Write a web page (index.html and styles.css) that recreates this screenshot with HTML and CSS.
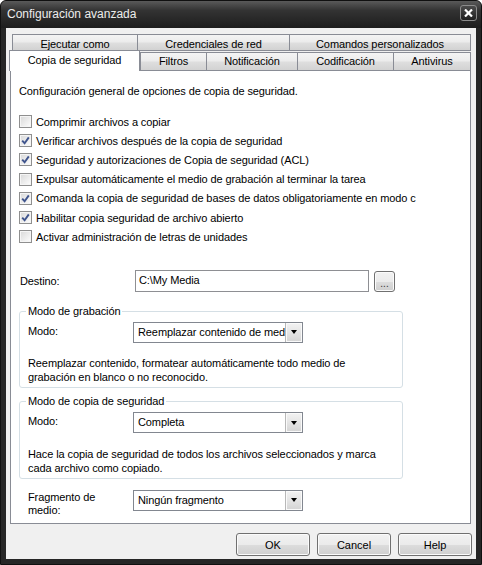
FILE: index.html
```html
<!DOCTYPE html>
<html lang="es">
<head>
  <meta charset="UTF-8">
  <title>Configuración avanzada</title>
  <link rel="stylesheet" href="styles.css">
</head>
<body>
  <div class="window">
    <div class="titlebar">
      <span class="title">Configuración avanzada</span>
      <button class="close" title="Cerrar">
        <svg width="9" height="8" viewBox="0 0 9 8"><path d="M1 0.5 L8 7.5 M8 0.5 L1 7.5" stroke="#fff" stroke-width="2.2" /></svg>
      </button>
    </div>

    <div class="client">
      <div class="tabs">
        <div class="tab-row back">
          <div class="tab t-ejecutar">Ejecutar como</div>
          <div class="tab t-credenciales">Credenciales de red</div>
          <div class="tab t-comandos">Comandos personalizados</div>
        </div>
        <div class="tab-row front">
          <div class="tab active t-copia">Copia de seguridad</div>
          <div class="tab t-filtros">Filtros</div>
          <div class="tab t-notificacion">Notificación</div>
          <div class="tab t-codificacion">Codificación</div>
          <div class="tab t-antivirus">Antivirus</div>
        </div>
      </div>

      <div class="panel">
        <p class="intro">Configuración general de opciones de copia de seguridad.</p>

        <ul class="checks">
          <li><span class="cb"></span>Comprimir archivos a copiar</li>
          <li><span class="cb"><svg width="9" height="9" viewBox="0 0 9 9"><path d="M1.2 4.6 L3.6 7.2 L7.8 1.4" /></svg></span>Verificar archivos después de la copia de seguridad</li>
          <li><span class="cb"><svg width="9" height="9" viewBox="0 0 9 9"><path d="M1.2 4.6 L3.6 7.2 L7.8 1.4" /></svg></span>Seguridad y autorizaciones de Copia de seguridad (ACL)</li>
          <li><span class="cb"></span>Expulsar automáticamente el medio de grabación al terminar la tarea</li>
          <li><span class="cb"><svg width="9" height="9" viewBox="0 0 9 9"><path d="M1.2 4.6 L3.6 7.2 L7.8 1.4" /></svg></span>Comanda la copia de seguridad de bases de datos obligatoriamente en modo c</li>
          <li><span class="cb"><svg width="9" height="9" viewBox="0 0 9 9"><path d="M1.2 4.6 L3.6 7.2 L7.8 1.4" /></svg></span>Habilitar copia seguridad de archivo abierto</li>
          <li><span class="cb"></span>Activar administración de letras de unidades</li>
        </ul>

        <div class="dest">
          <label>Destino:</label>
          <div class="textbox">C:\My Media</div>
          <button class="btn browse">...</button>
        </div>

        <fieldset class="group group-first">
          <legend>Modo de grabación</legend>
          <div class="field">
            <label>Modo:</label>
            <div class="combo"><span class="combo-text">Reemplazar contenido de medio</span><span class="combo-btn"></span></div>
          </div>
          <p class="desc">Reemplazar contenido, formatear automáticamente todo medio de<br>grabación en blanco o no reconocido.</p>
        </fieldset>

        <fieldset class="group">
          <legend>Modo de copia de seguridad</legend>
          <div class="field">
            <label>Modo:</label>
            <div class="combo"><span class="combo-text">Completa</span><span class="combo-btn"></span></div>
          </div>
          <p class="desc">Hace la copia de seguridad de todos los archivos seleccionados y marca<br>cada archivo como copiado.</p>
        </fieldset>

        <div class="field fragment">
          <label>Fragmento de<br>medio:</label>
          <div class="combo"><span class="combo-text">Ningún fragmento</span><span class="combo-btn"></span></div>
        </div>
      </div>

      <div class="footer">
        <button class="btn">OK</button>
        <button class="btn">Cancel</button>
        <button class="btn">Help</button>
      </div>
    </div>
  </div>
</body>
</html>
```

FILE: styles.css
```css
body {
  margin: 0;
  font-family: 'Liberation Sans', Arial, sans-serif;
  font-size: 11px;
  letter-spacing: -0.1px;
  color: #000;
  background: #fff;
}

.window {
  width: 482px;
  height: 565px;
  box-sizing: border-box;
  border: 1px solid #101010;
  border-radius: 6px 6px 0 0;
  background: #262626;
  display: flex;
  flex-direction: column;
  overflow: hidden;
}

/* title bar */
.titlebar {
  height: 27px;
  flex: none;
  display: flex;
  align-items: flex-start;
  justify-content: space-between;
  padding: 0 4px 0 6px;
  background: linear-gradient(#5a5a5a 0%, #333 35%, #1d1d1d 100%);
}

.title {
  color: #ececec;
  font-size: 12px;
  letter-spacing: 0;
  line-height: 27px;
}

.close {
  margin-top: 4px;
  width: 17px;
  height: 16px;
  padding: 0;
  border: 1px solid #8c8c8c;
  border-radius: 3px;
  background: linear-gradient(#4c4c4c, #202020);
  display: flex;
  align-items: center;
  justify-content: center;
}

/* client area */
.client {
  flex: 1;
  margin: 0 5px 5px 5px;
  background: #f0f0f0;
  padding-top: 6px;
  display: flex;
  flex-direction: column;
}

/* tabs */
.tabs {
  position: relative;
  z-index: 1;
}

.tab-row {
  display: flex;
  align-items: flex-end;
}

.tab-row.back {
  height: 16px;
  padding-left: 6px;
}

.tab-row.front {
  height: 20px;
  padding-left: 3px;
}

.tab {
  box-sizing: border-box;
  border: 1px solid #898c95;
  border-bottom: none;
  background: linear-gradient(#f4f4f4 0%, #ececec 45%, #dedede 55%, #d2d2d2 100%);
  text-align: center;
  white-space: nowrap;
  margin-left: -1px;
}

.tab:first-child {
  margin-left: 0;
}

.back .tab {
  height: 17px;
  line-height: 18px;
  border-bottom: 1px solid #898c95;
  margin-bottom: -1px;
}

.front .tab {
  height: 18px;
  line-height: 17px;
}

.front .tab.active {
  height: 21px;
  margin-bottom: -1px;
  line-height: 19px;
  background: #fff;
  position: relative;
  z-index: 2;
}

.front .tab.active + .tab {
  margin-left: 0;
}

.t-ejecutar { width: 126px; }
.t-credenciales { width: 153px; }
.t-comandos { width: 182px; }
.t-copia { width: 131px; }
.t-filtros { width: 67px; }
.t-notificacion { width: 92px; }
.t-codificacion { width: 97px; }
.t-antivirus { width: 78px; }

/* panel */
.panel {
  box-sizing: border-box;
  width: 461px;
  height: 454px;
  margin-left: 4px;
  border: 1px solid #898c95;
  background: #fff;
  padding: 0 8px;
}

.intro {
  margin: 13px 0 0;
  line-height: 15px;
}

.checks {
  list-style: none;
  margin: 13px 0 0;
  padding: 0;
}

.checks li {
  height: 19.2px;
  display: flex;
  align-items: center;
  gap: 4px;
  white-space: nowrap;
}

.cb {
  width: 13px;
  height: 13px;
  box-sizing: border-box;
  flex: none;
  border: 1px solid #8f8f8f;
  background: linear-gradient(135deg, #d8d8d8, #f6f6f6 80%, #fff);
  box-shadow: inset 0 0 0 1px #f5f5f5;
  display: flex;
  align-items: center;
  justify-content: center;
}

.cb path {
  fill: none;
  stroke: #40558d;
  stroke-width: 1.9;
}

/* destino row */
.dest {
  margin-top: 23.6px;
  height: 22px;
  display: flex;
  align-items: center;
}

.dest label {
  width: 115px;
  padding-left: 1px;
}

.textbox {
  box-sizing: border-box;
  width: 234px;
  height: 22px;
  border: 1px solid #8e8f93;
  padding-left: 3px;
  line-height: 18px;
  background: #fff;
}

.btn {
  box-sizing: border-box;
  height: 23px;
  width: 74px;
  padding: 0;
  border: 1px solid #707070;
  border-radius: 3px;
  background: linear-gradient(#f2f2f2 0%, #ebebeb 50%, #dddddd 51%, #cfcfcf 100%);
  box-shadow: inset 0 0 0 1px #fbfbfb;
  font-family: inherit;
  font-size: 11px;
  color: #000;
}

.browse {
  width: 21px;
  height: 21px;
  margin-left: 5px;
  margin-top: 1px;
  line-height: 24px;
  font-size: 10px;
  color: #333;
}

/* group boxes */
.group {
  box-sizing: border-box;
  width: 384px;
  margin: 6px 0 0;
  padding: 0 8px 3px;
  border: 1px solid #d5dfe5;
  border-radius: 3px;
}

.group.group-first {
  margin-top: 12px;
}

.group legend {
  padding: 0 2px;
  margin-left: -2px;
  line-height: 15px;
}

.field {
  display: flex;
  align-items: flex-start;
  margin-top: 3px;
}

.field label {
  width: 105px;
  flex: none;
  line-height: 19px;
}

.combo {
  box-sizing: border-box;
  width: 170px;
  height: 21px;
  border: 1px solid #828790;
  background: #fff;
  display: flex;
}

.combo-text {
  flex: 1;
  overflow: hidden;
  white-space: nowrap;
  padding-left: 4px;
  line-height: 19px;
}

.combo-btn {
  width: 16px;
  flex: none;
  border-left: 1px solid #b8b8b8;
  background: linear-gradient(#f3f3f3, #e4e4e4 50%, #d4d4d4);
  box-shadow: inset 0 0 0 1px #fafafa;
  display: flex;
  align-items: center;
  justify-content: center;
}

.combo-btn::after {
  content: '';
  border-left: 3.5px solid transparent;
  border-right: 3.5px solid transparent;
  border-top: 4px solid #000;
}

.desc {
  margin: 13.5px 0 0;
  line-height: 14px;
}

.field.fragment {
  margin-top: 11px;
  padding-left: 9px;
}

.fragment label {
  line-height: 13px;
  padding-top: 1px;
}

/* footer buttons */
.footer {
  margin-top: 9px;
  display: flex;
  justify-content: flex-end;
  gap: 7px;
  padding-right: 4px;
}
```
